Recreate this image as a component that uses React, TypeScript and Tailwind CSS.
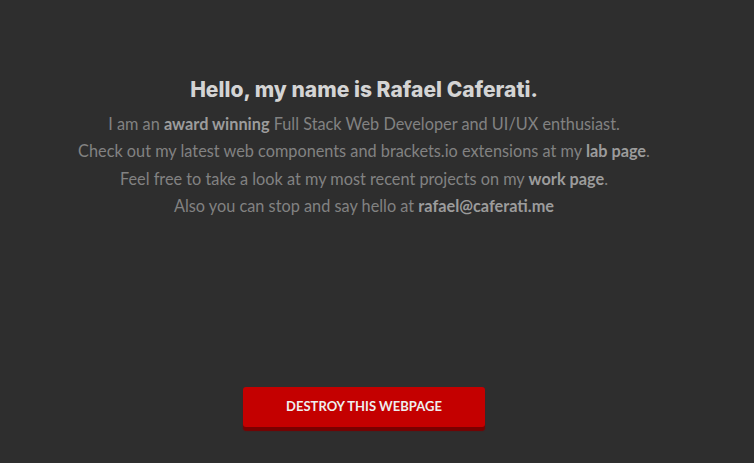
export default function App() {
  return (
    <div className="w-full h-[463px] bg-[#2e2e2e] pr-[26px] flex flex-col items-center overflow-hidden font-['Lato',sans-serif]">
      <div className="pt-[77px] flex flex-col items-center text-center">
        <h1 className="text-[21px] leading-[26px] font-extrabold text-[#d4d4d4] font-['Inter',sans-serif] tracking-[0.03px]">
          Hello, my name is Rafael Caferati.
        </h1>
        <div className="mt-[7px] text-[16.3px] leading-[27.4px] text-[#828282]">
          <p>
            I am an <b className="text-[#9c9c9c]">award winning</b> Full Stack Web Developer and UI/UX enthusiast.
          </p>
          <p>
            Check out my latest web components and brackets.io extensions at my{' '}
            <b className="text-[#9c9c9c]">lab page</b>.
          </p>
          <p>
            Feel free to take a look at my most recent projects on my <b className="text-[#9c9c9c]">work page</b>.
          </p>
          <p>
            Also you can stop and say hello at <b className="text-[#9c9c9c]">rafael@caferati.me</b>
          </p>
        </div>
      </div>
      <button className="mt-[167px] w-[242px] h-[40px] rounded-[3px] bg-[#c40000] shadow-[0_4px_1px_#7a0000] text-[13px] font-bold text-[#eeeeee] uppercase">
        Destroy this webpage
      </button>
    </div>
  );
}
